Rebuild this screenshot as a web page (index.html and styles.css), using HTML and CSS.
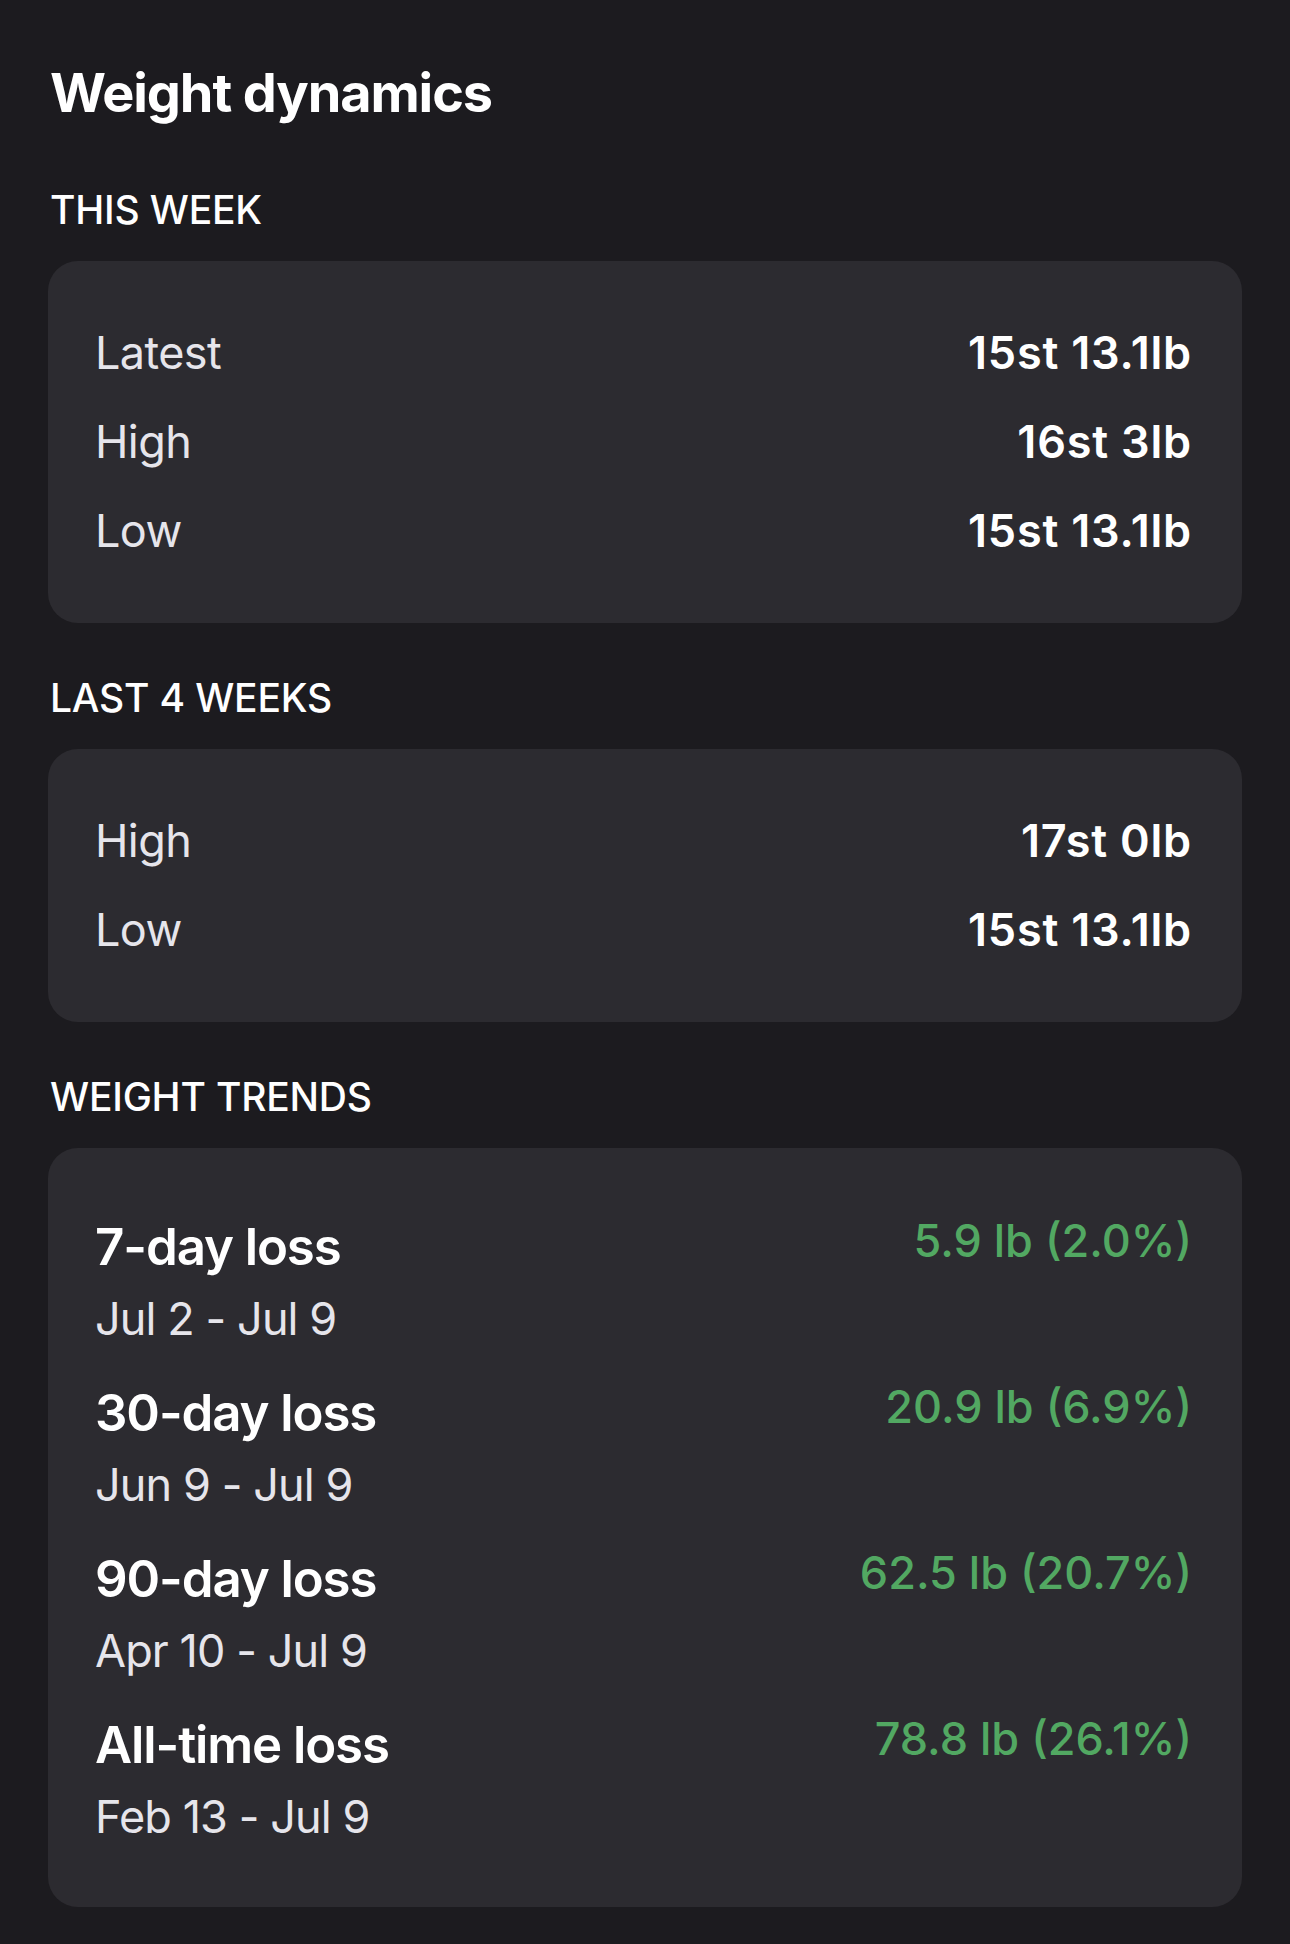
FILE: index.html
```html
<!DOCTYPE html>
<html lang="en">
<head>
    <meta charset="UTF-8">
    <meta name="viewport" content="width=device-width, initial-scale=1.0">
    <title>Weight dynamics</title>
    <link rel="stylesheet" href="styles.css">
</head>
<body>
    <h1>Weight dynamics</h1>

    <h2 class="section-title">This week</h2>
    <div class="card">
        <div class="row"><span class="label">Latest</span><span class="value">15st 13.1lb</span></div>
        <div class="row"><span class="label">High</span><span class="value">16st 3lb</span></div>
        <div class="row"><span class="label">Low</span><span class="value">15st 13.1lb</span></div>
    </div>

    <h2 class="section-title">Last 4 weeks</h2>
    <div class="card">
        <div class="row"><span class="label">High</span><span class="value">17st 0lb</span></div>
        <div class="row"><span class="label">Low</span><span class="value">15st 13.1lb</span></div>
    </div>

    <h2 class="section-title">Weight trends</h2>
    <div class="card">
        <div class="trend">
            <div class="trend-info">
                <div class="trend-name">7-day loss</div>
                <div class="trend-dates">Jul 2 - Jul 9</div>
            </div>
            <div class="trend-value">5.9 lb (2.0%)</div>
        </div>
        <div class="trend">
            <div class="trend-info">
                <div class="trend-name">30-day loss</div>
                <div class="trend-dates">Jun 9 - Jul 9</div>
            </div>
            <div class="trend-value">20.9 lb (6.9%)</div>
        </div>
        <div class="trend">
            <div class="trend-info">
                <div class="trend-name">90-day loss</div>
                <div class="trend-dates">Apr 10 - Jul 9</div>
            </div>
            <div class="trend-value">62.5 lb (20.7%)</div>
        </div>
        <div class="trend">
            <div class="trend-info">
                <div class="trend-name">All-time loss</div>
                <div class="trend-dates">Feb 13 - Jul 9</div>
            </div>
            <div class="trend-value">78.8 lb (26.1%)</div>
        </div>
    </div>
</body>
</html>
```

FILE: styles.css
```css
:root {
    --bg-color: #1c1b1f;
    --card-color: #2c2b30;
    --text-color: #ffffff;
    --label-color: #e6e5eb;
    --green: #52a862;
}

body {
    font-family: Inter, 'Noto Sans', sans-serif;
    margin: 0;
    padding: 0 48px;
    background-color: var(--bg-color);
    color: var(--text-color);
}

h1 {
    margin: 60px 0 0 2px;
    font-size: 54px;
    line-height: 66px;
    font-weight: 700;
    letter-spacing: -1.1px;
}

.section-title {
    margin: 51px 0 28px 2px;
    font-size: 39px;
    line-height: 47px;
    font-weight: 500;
    text-transform: uppercase;
    letter-spacing: -0.2px;
}

h1 + .section-title {
    margin-top: 60px;
}

.card {
    background-color: var(--card-color);
    border-radius: 30px;
    padding: 47px 50px 48px 47px;
}

.row {
    display: flex;
    justify-content: space-between;
    padding: 17px 0;
    font-size: 45px;
    line-height: 55px;
}

.label {
    color: var(--label-color);
    letter-spacing: -0.6px;
}

.value {
    font-weight: 600;
    letter-spacing: 0.8px;
}

.trend {
    display: flex;
    justify-content: space-between;
    align-items: flex-start;
    padding: 21px 0 15px;
}

.trend-name {
    font-size: 51px;
    line-height: 62px;
    font-weight: 600;
    letter-spacing: -1.1px;
}

.trend-dates {
    margin-top: 14px;
    font-size: 45px;
    line-height: 54px;
    color: var(--label-color);
    letter-spacing: -0.9px;
}

.trend-value {
    margin-top: -2px;
    font-size: 45px;
    line-height: 54px;
    font-weight: 500;
    color: var(--green);
}
```
